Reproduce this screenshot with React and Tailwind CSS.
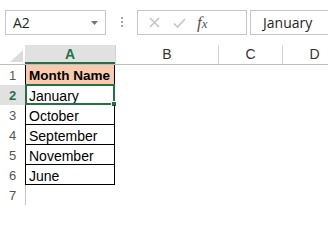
const rows = [
  { n: 1, a: "Month Name", head: true },
  { n: 2, a: "January", selected: true },
  { n: 3, a: "October" },
  { n: 4, a: "September" },
  { n: 5, a: "November" },
  { n: 6, a: "June" },
  { n: 7, a: "", empty: true },
];

const cellFont = { fontFamily: '"Liberation Sans", Arial, sans-serif' };

const Row = ({ row }) => (
  <div className="flex h-[20px]">
    <div
      className={`w-[25px] shrink-0 h-[20px] text-center text-[13px] pt-[3px] leading-[16px] ${
        row.selected
          ? "bg-[#e1e1e1] text-[#217346] font-bold"
          : "text-[#555]"
      }`}
    >
      {row.n}
    </div>
    <div
      className={`relative w-[90px] shrink-0 h-[20px] pl-[3px] pt-[3px] leading-[16px] text-black whitespace-nowrap ${
        row.empty
          ? "border-l border-[#c6c6c6]"
          : "border-l border-r border-b border-black"
      } ${row.head ? "bg-[#f8cbad] font-bold text-[13.5px]" : "text-[14px]"}`}
    >
      {row.a}
      {row.selected && (
        <div className="absolute -top-[1px] -left-[1px] -right-[1px] -bottom-[1px] border-2 border-[#217346]">
          <div className="absolute -right-[4px] -bottom-[4px] w-[6px] h-[6px] bg-[#217346] border border-white" />
        </div>
      )}
    </div>
    <div className="w-[103px] shrink-0" />
    <div className="w-[64px] shrink-0" />
    <div className="w-[64px] shrink-0" />
  </div>
);

const App = () => {
  return (
    <div className="w-[328px] h-[210px] overflow-hidden bg-white" style={cellFont}>
      {/* formula bar */}
      <div
        className="h-[45px] flex items-start pt-[10px]"
        style={{ fontFamily: '"Open Sans", "Noto Sans", sans-serif' }}
      >
        <div className="ml-[5px] w-[101px] h-[25px] shrink-0 border border-[#c6c6c6] flex items-center justify-between pl-[7px] pr-[7px]">
          <span className="text-[14px] text-[#262626]">A2</span>
          <svg width="7" height="4" viewBox="0 0 7 4">
            <polygon points="0,0 7,0 3.5,4" fill="#777" />
          </svg>
        </div>
        <div className="ml-[15px] mt-[7px] w-[2px] shrink-0 flex flex-col gap-[2px]">
          <div className="w-[2px] h-[2px] bg-[#a6a6a6]" />
          <div className="w-[2px] h-[2px] bg-[#a6a6a6]" />
          <div className="w-[2px] h-[2px] bg-[#a6a6a6]" />
        </div>
        <div className="ml-[14px] w-[110px] h-[25px] shrink-0 border border-[#c6c6c6] flex items-center pl-[11px]">
          <svg width="11" height="11" viewBox="0 0 11 11">
            <path d="M1 1 L10 10 M10 1 L1 10" stroke="#c4c4c4" strokeWidth="1.6" />
          </svg>
          <svg className="ml-[13px]" width="13" height="10" viewBox="0 0 13 10">
            <path d="M1 5.5 L4.5 9 L12 1" stroke="#c4c4c4" strokeWidth="1.6" fill="none" />
          </svg>
          <span
            className="ml-[11px] italic text-[17px] text-[#555] leading-none"
            style={{ fontFamily: '"Liberation Serif", "Times New Roman", serif' }}
          >
            f<span className="text-[13px]">x</span>
          </span>
        </div>
        <div className="ml-[3px] w-[100px] h-[25px] shrink-0 border border-[#c6c6c6] flex items-center pl-[12px]">
          <span className="text-[14px] text-[#262626]">January</span>
        </div>
      </div>

      {/* column headers */}
      <div className="flex h-[20px] border-b border-[#bdbdbd]">
        <div className="relative w-[25px] shrink-0 h-[19px]">
          <svg className="absolute right-[2px] bottom-[2px]" width="13" height="12" viewBox="0 0 13 12">
            <polygon points="13,0 13,12 0,12" fill="#dcdcdc" />
          </svg>
        </div>
        <div className="w-[90px] shrink-0 h-[19px] bg-[#e1e1e1] border-b-2 border-[#217346] text-center text-[14px] font-bold text-[#217346] pt-[1px] leading-[16px]">
          A
        </div>
        <div className="w-[103px] shrink-0 h-[19px] border-l border-[#d4d4d4] text-center text-[14px] text-[#333] pt-[1px] leading-[16px]">
          B
        </div>
        <div className="w-[64px] shrink-0 h-[19px] border-l border-[#d4d4d4] text-center text-[14px] text-[#333] pt-[1px] leading-[16px]">
          C
        </div>
        <div className="w-[64px] shrink-0 h-[19px] border-l border-[#d4d4d4] text-center text-[14px] text-[#333] pt-[1px] leading-[16px]">
          D
        </div>
      </div>

      {rows.map((row) => (
        <Row key={row.n} row={row} />
      ))}
    </div>
  );
};

export default App;
